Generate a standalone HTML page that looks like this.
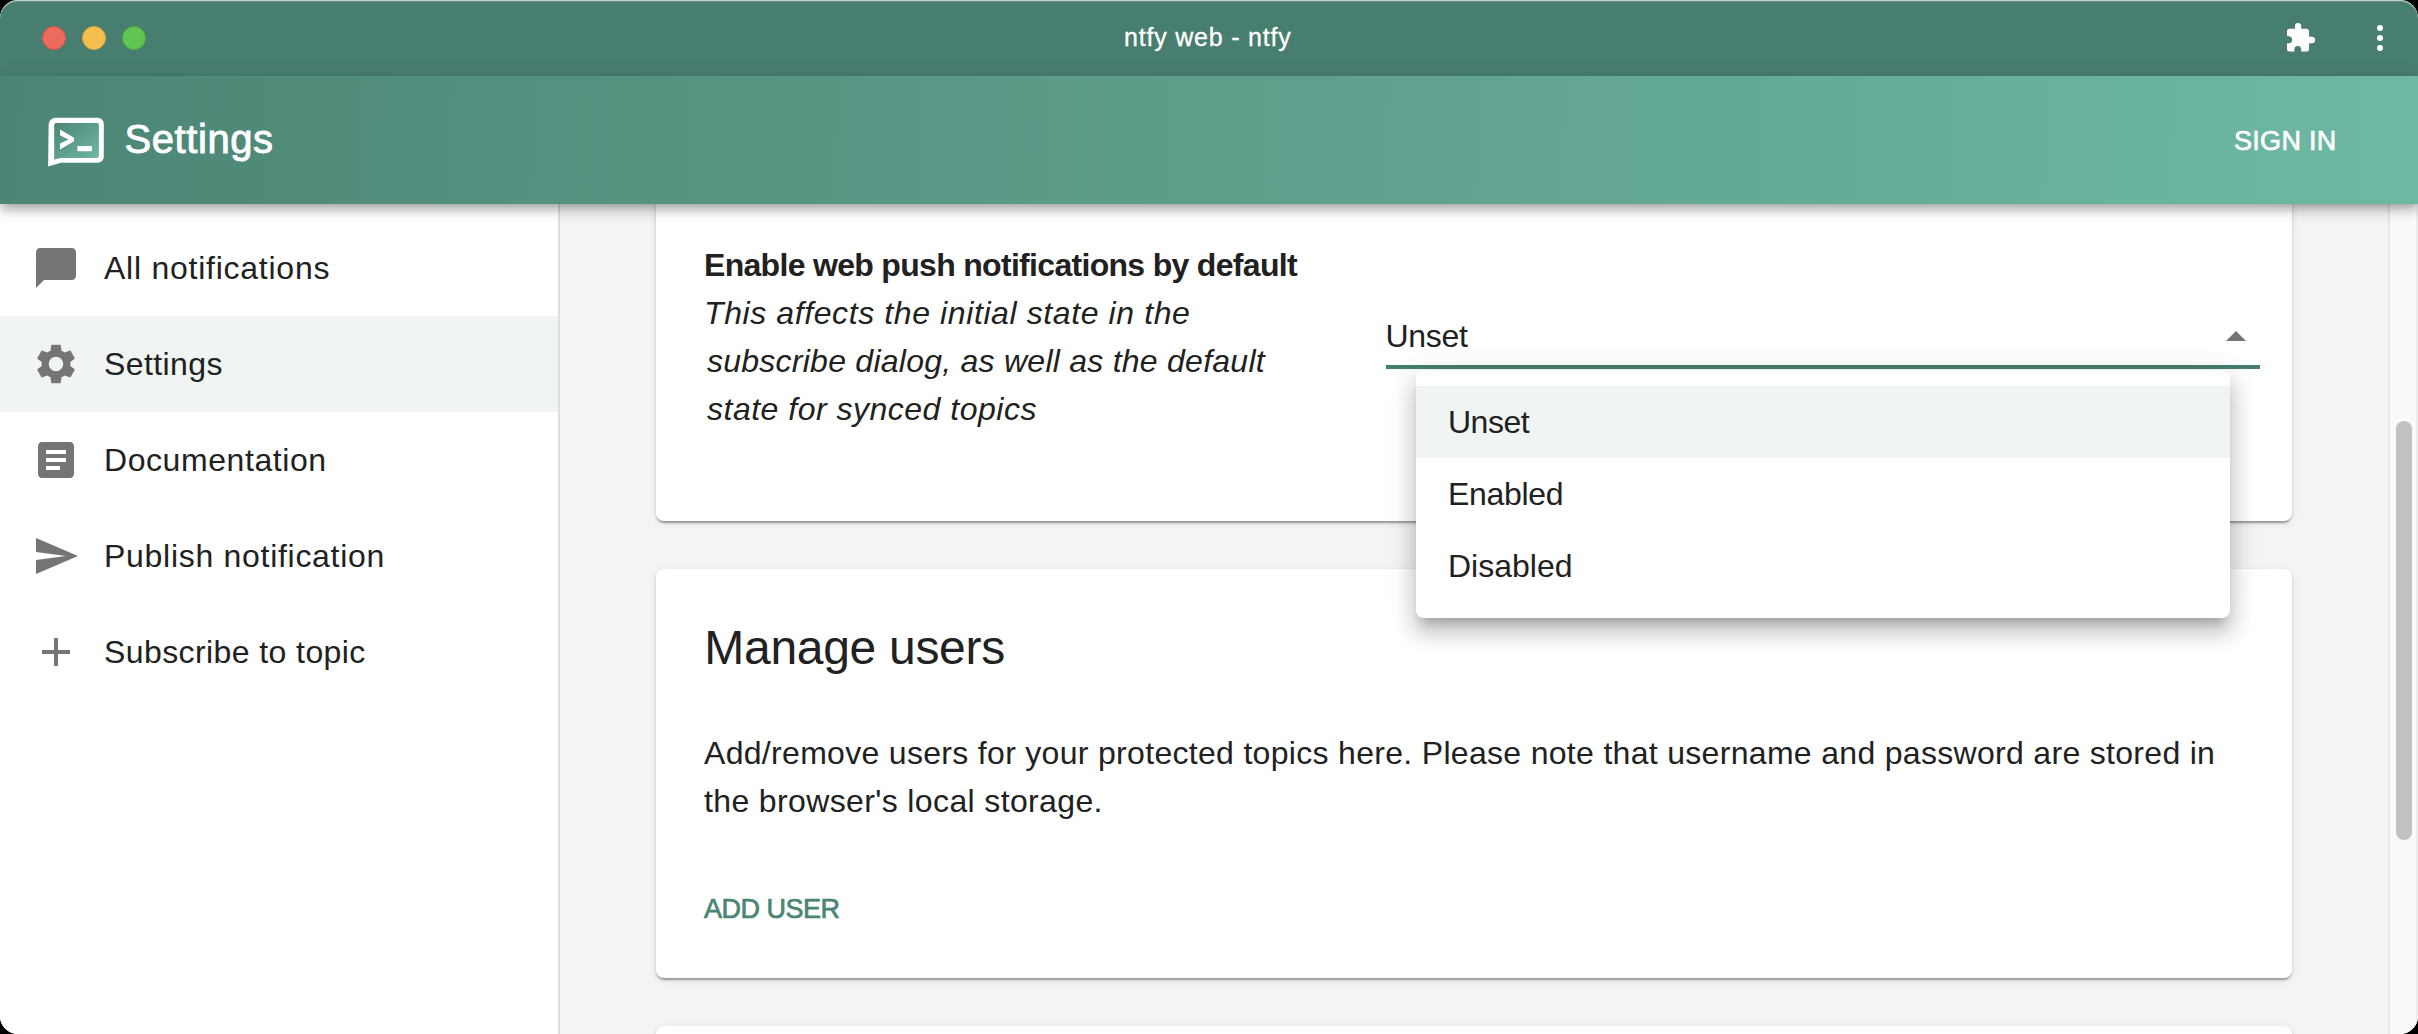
<!DOCTYPE html>
<html><head><meta charset="utf-8">
<style>
*{margin:0;padding:0;box-sizing:border-box}
html,body{width:2418px;height:1034px;overflow:hidden;background:#000}
body{font-family:"Liberation Sans",sans-serif;position:relative}
.win{position:absolute;left:0;top:0;width:2418px;height:1034px;border-radius:18px;overflow:hidden;background:#f4f4f4}
.abs{position:absolute;white-space:nowrap}
.titlebar{position:absolute;left:0;top:0;width:2418px;height:76px;background:#487e70}
.titlebar .hl{position:absolute;left:0;top:0;width:100%;height:1px;background:#b5c8c2}
.tl{position:absolute;top:26px;width:24px;height:24px;border-radius:50%}
.appbar{position:absolute;left:0;top:76px;width:2418px;height:128px;background:linear-gradient(92deg,#4c8575 0%,#5d9e8b 50%,#6db8a4 100%);z-index:5;box-shadow:0 4px 8px -2px rgba(0,0,0,.2),0 8px 10px 0 rgba(0,0,0,.14),0 2px 20px 0 rgba(0,0,0,.12)}
.sidebar{position:absolute;left:0;top:204px;width:560px;height:830px;background:#fff;border-right:2px solid #dedede}
.navrow{position:absolute;left:0;width:558px;height:96px}
.navrow.sel{background:#f0f4f3}
.navtxt{position:absolute;left:104px;top:32px;font-size:32px;line-height:32px;color:#212121}
.navicon{position:absolute;left:32px;width:48px;height:48px;top:24px}
.main{position:absolute;left:560px;top:204px;width:1828px;height:830px;background:#f4f4f4}
.card{position:absolute;left:656px;width:1636px;background:#fff;border-radius:8px;box-shadow:0 4px 2px -2px rgba(0,0,0,.2),0 2px 2px 0 rgba(0,0,0,.14),0 2px 6px 0 rgba(0,0,0,.12)}
.scroll{position:absolute;left:2388px;top:204px;width:30px;height:830px;background:#fafafa;border-left:2px solid #e6e6e6;border-right:2px solid #ececec}
.thumb{position:absolute;left:2396px;top:421px;width:16px;height:419px;border-radius:8px;background:#c1c1c1}
.menu{position:absolute;left:1416px;top:370px;width:814px;height:248px;background:#fff;border-radius:8px;z-index:10;box-shadow:0 10px 10px -6px rgba(0,0,0,.2),0 16px 20px 2px rgba(0,0,0,.14),0 6px 28px 4px rgba(0,0,0,.12)}
.mi{position:absolute;left:0;width:814px;height:72px}
.mi.sel{background:#f0f4f3}
.mitxt{position:absolute;left:32px;font-size:32px;line-height:32px;color:#212121}
</style></head><body>
<div class="win">
  <div class="titlebar">
    <div class="tl" style="left:42px;background:#ec6a5e;border:1px solid #d65343"></div>
    <div class="tl" style="left:82px;background:#f4bf4f;border:1px solid #d9a43c"></div>
    <div class="tl" style="left:122px;background:#61c554;border:1px solid #50a93f"></div>
    <div class="abs" style="left:-1.2px;width:2418px;text-align:center;top:24.8px;font-size:25px;line-height:25px;color:#fff;letter-spacing:0.8px;-webkit-text-stroke:0.3px #fff">ntfy web - ntfy</div>
    <svg class="abs" style="left:2276px;top:16px" width="48" height="44" viewBox="2276 16 48 44">
      <rect x="2287" y="28.7" width="22" height="22.8" rx="2.5" fill="#fff"/>
      <rect x="2295" y="26" width="6.2" height="4" fill="#fff"/>
      <circle cx="2298.1" cy="26" r="3.1" fill="#fff"/>
      <rect x="2307" y="36.7" width="5" height="6.6" fill="#fff"/>
      <circle cx="2311.8" cy="40" r="3.3" fill="#fff"/>
      <circle cx="2288.6" cy="39.7" r="3.5" fill="#487e70"/>
      <circle cx="2297.8" cy="49.3" r="3.3" fill="#487e70"/>
      <rect x="2284" y="36.2" width="4.6" height="7" fill="#487e70"/>
      <rect x="2294.5" y="49.3" width="6.6" height="4" fill="#487e70"/>
    </svg>
    <div class="abs" style="left:2377px;top:25px;width:6.2px;height:6.2px;border-radius:50%;background:#fff"></div>
    <div class="abs" style="left:2377px;top:35px;width:6.2px;height:6.2px;border-radius:50%;background:#fff"></div>
    <div class="abs" style="left:2377px;top:45px;width:6.2px;height:6.2px;border-radius:50%;background:#fff"></div>
  </div>
  <div class="appbar">
    <svg class="abs" style="left:40px;top:34px" width="72" height="60" viewBox="40 110 72 60">
      <defs><linearGradient id="lg" x1="0" y1="0" x2="1" y2="1"><stop offset="0" stop-color="#4b8575"/><stop offset="1" stop-color="#6fb8a5"/></linearGradient></defs>
      <path fill="#fff" d="M55.5 117.8 H97.8 A6 6 0 0 1 103.8 123.8 V156.8 A6 6 0 0 1 97.8 162.8 H61 L48.1 166.4 L48.6 124.8 A7 7 0 0 1 55.6 117.8 Z"/>
      <path fill="url(#lg)" d="M56.2 123 H96.9 A2 2 0 0 1 98.9 125 V155.9 A2 2 0 0 1 96.9 157.9 H60.9 L54.2 159.6 V125 A2 2 0 0 1 56.2 123 Z"/>
      <path fill="#fff" d="M60 129.4 L74 137.8 L74 141.3 L60 149.4 L60 143.4 L68.4 139.5 L60 135.2 Z"/>
      <rect x="77.4" y="146" width="14.5" height="5.2" fill="#fff"/>
    </svg>
    <div class="abs" style="left:124.5px;top:42.5px;font-size:40px;line-height:40px;color:#fff;letter-spacing:0.57px;-webkit-text-stroke:0.9px #fff">Settings</div>
    <div class="abs" style="left:2234px;top:51.5px;font-size:27px;line-height:27px;color:#fff;letter-spacing:0.3px;-webkit-text-stroke:0.7px #fff">SIGN IN</div>
  </div>
  <div class="sidebar">
    <div class="navrow" style="top:16px"><div class="navtxt" style="letter-spacing:0.75px">All notifications</div></div>
    <div class="navrow sel" style="top:112px"><div class="navtxt" style="letter-spacing:0.4px">Settings</div></div>
    <div class="navrow" style="top:208px"><div class="navtxt" style="letter-spacing:0.57px">Documentation</div></div>
    <div class="navrow" style="top:304px"><div class="navtxt" style="letter-spacing:0.71px">Publish notification</div></div>
    <div class="navrow" style="top:400px"><div class="navtxt" style="letter-spacing:0.41px">Subscribe to topic</div></div>
  </div>
  <svg class="abs" style="left:32px;top:244px" width="48" height="48" viewBox="0 0 24 24"><path fill="#757575" d="M20 2H4c-1.1 0-1.99.9-1.99 2L2 22l4-4h14c1.1 0 2-.9 2-2V4c0-1.1-.9-2-2-2z"/></svg>
  <svg class="abs" style="left:32px;top:340px" width="48" height="48" viewBox="0 0 24 24"><path fill="#757575" d="M19.14 12.94c.04-.3.06-.61.06-.94 0-.32-.02-.64-.07-.94l2.03-1.58c.18-.14.23-.41.12-.61l-1.92-3.32c-.12-.22-.37-.29-.59-.22l-2.39.96c-.5-.38-1.030-.7-1.62-.94l-.36-2.54c-.04-.24-.24-.41-.48-.41h-3.84c-.24 0-.43.17-.47.41l-.36 2.54c-.59.24-1.13.57-1.62.94l-2.39-.96c-.22-.08-.47 0-.59.22L2.74 8.87c-.12.21-.08.47.12.61l2.03 1.58c-.05.3-.09.63-.09.94s.02.64.07.94l-2.03 1.58c-.18.14-.23.41-.12.61l1.92 3.32c.12.22.37.29.59.22l2.39-.96c.5.38 1.03.7 1.62.94l.36 2.54c.05.24.24.41.48.41h3.840c.24 0 .44-.17.47-.41l.36-2.54c.59-.24 1.13-.56 1.62-.94l2.39.96c.22.08.47 0 .59-.22l1.92-3.32c.12-.22.07-.47-.12-.61l-2.01-1.58zM12 15.6c-1.98 0-3.6-1.62-3.6-3.6s1.62-3.6 3.6-3.6 3.6 1.62 3.6 3.6-1.62 3.6-3.6 3.6z"/></svg>
  <svg class="abs" style="left:32px;top:436px" width="48" height="48" viewBox="0 0 24 24"><path fill="#757575" d="M19 3H5c-1.1 0-2 .9-2 2v14c0 1.1.9 2 2 2h14c1.1 0 2-.9 2-2V5c0-1.1-.9-2-2-2zm-5 14H7v-2h7v2zm3-4H7v-2h10v2zm0-4H7V7h10v2z"/></svg>
  <svg class="abs" style="left:32px;top:532px" width="48" height="48" viewBox="0 0 24 24"><path fill="#757575" d="M2.01 21 23 12 2.01 3 2 10l15 2-15 2z"/></svg>
  <svg class="abs" style="left:32px;top:628px" width="48" height="48" viewBox="0 0 24 24"><path fill="#757575" d="M19 13h-6v6h-2v-6H5v-2h6V5h2v6h6v2z"/></svg>

  <div class="main"></div>
  <div class="card" style="top:100px;height:421px"></div>
  <div class="card" style="top:569px;height:409px"></div>
  <div class="card" style="top:1026px;height:300px"></div>
  <div class="scroll"></div>
  <div class="thumb"></div>
  <div class="abs" style="left:704px;top:248.5px;font-size:32px;line-height:32px;font-weight:700;color:#212121;letter-spacing:-0.69px">Enable web push notifications by default</div>
  <div class="abs" style="left:704px;top:297px;font-size:32px;line-height:32px;font-style:italic;color:#212121;letter-spacing:0.6px">This affects the initial state in the</div>
  <div class="abs" style="left:704px;top:345px;font-size:32px;line-height:32px;font-style:italic;color:#212121;letter-spacing:0.25px;margin-left:3px">subscribe dialog, as well as the default</div>
  <div class="abs" style="left:704px;top:393px;font-size:32px;line-height:32px;font-style:italic;color:#212121;letter-spacing:0.5px;margin-left:3px">state for synced topics</div>
  <div class="abs" style="left:1385.5px;top:320px;font-size:32px;line-height:32px;color:#212121;letter-spacing:-0.3px">Unset</div>
  <svg class="abs" style="left:2212px;top:313px" width="48" height="48" viewBox="0 0 24 24"><path fill="#757575" d="M7 14l5-5 5 5z"/></svg>
  <div class="abs" style="left:1386px;top:365px;width:874px;height:4px;background:#477e6f"></div>
  <div class="abs" style="left:704.3px;top:624.3px;font-size:48px;line-height:48px;color:#212121;letter-spacing:-0.3px">Manage users</div>
  <div class="abs" style="left:704px;top:737px;font-size:32px;line-height:32px;color:#212121;letter-spacing:0.31px">Add/remove users for your protected topics here. Please note that username and password are stored in</div>
  <div class="abs" style="left:704px;top:785px;font-size:32px;line-height:32px;color:#212121;letter-spacing:0.37px">the browser's local storage.</div>
  <div class="abs" style="left:704px;top:896px;font-size:27px;line-height:27px;color:#4a8575;font-weight:400;letter-spacing:-0.5px;-webkit-text-stroke:0.7px #4a8575">ADD USER</div>
  <div class="menu">
    <div class="mi sel" style="top:16px"></div>
    <div class="mitxt" style="top:36px;letter-spacing:-0.5px">Unset</div>
    <div class="mitxt" style="top:108px;letter-spacing:-0.33px">Enabled</div>
    <div class="mitxt" style="top:180px">Disabled</div>
  </div>
  <div style="position:absolute;left:0;top:0;width:2418px;height:1034px;border-radius:18px;box-shadow:inset 0 1px 0 rgba(255,255,255,0.6),inset 0 2px 0 rgba(255,255,255,0.15);z-index:50;pointer-events:none"></div>
</div>
</body></html>
